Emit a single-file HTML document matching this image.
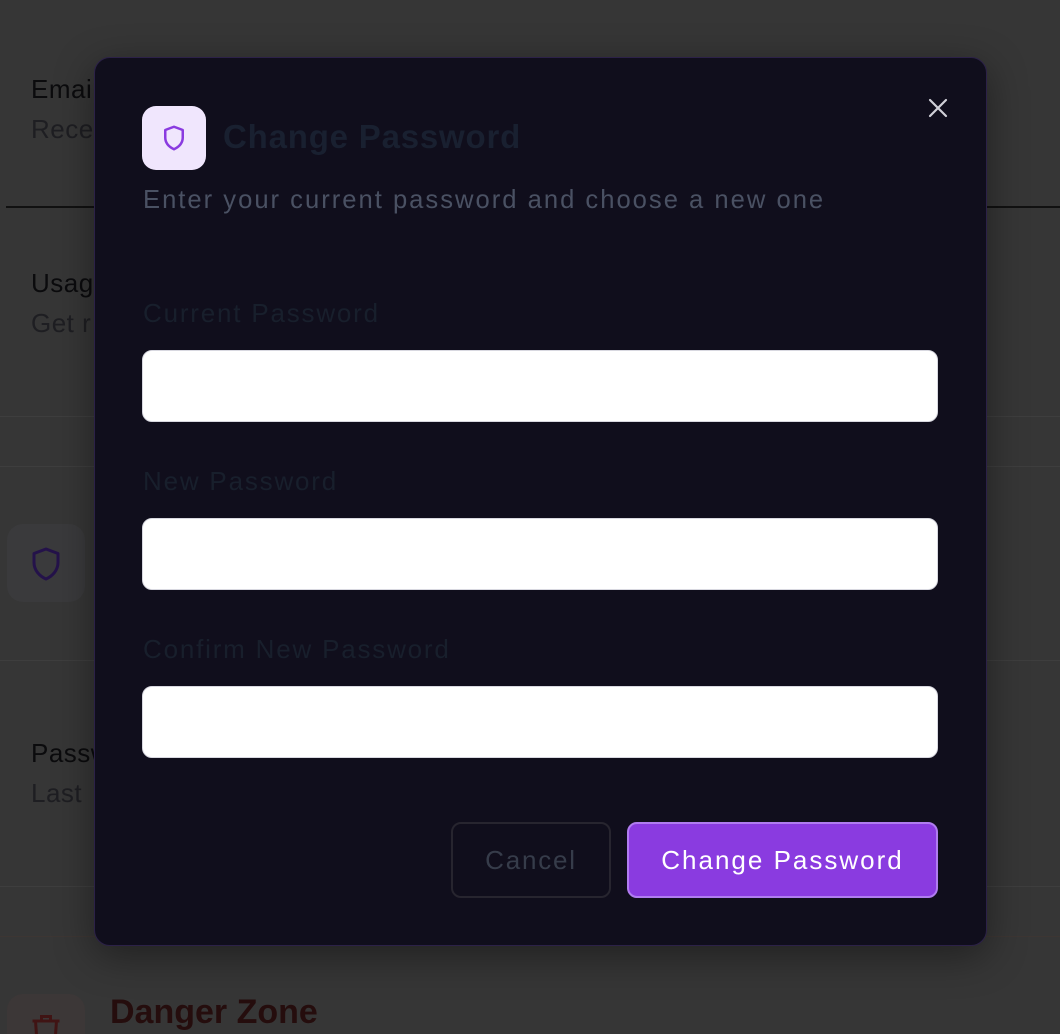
<!DOCTYPE html>
<html><head><style>
html,body{margin:0;width:1060px;height:1034px;overflow:hidden}
body{background:#363636;font-family:"Liberation Sans",sans-serif;position:relative}
.a{position:absolute}
.t{font-size:26px;color:#0b0b0d;letter-spacing:0.5px}
.s{font-size:26px;color:#1e1e22;letter-spacing:0.5px}
.ln{position:absolute;left:0;right:0;height:1px;background:#3e3e3e}
.m{position:absolute;left:94px;top:57px;width:891px;height:887px;background:#100e1c;border:1px solid #2c2148;border-radius:16px;box-shadow:0 10px 40px rgba(0,0,0,.4)}
.lab{position:absolute;left:48px;font-size:26px;color:#181f2c;letter-spacing:1.8px}
.in{position:absolute;left:47px;width:794px;height:70px;background:#fff;border:1px solid #d8d8e0;border-radius:10px}
</style></head><body>
<div class="a t" style="left:31px;top:74px">Email</div>
<div class="a s" style="left:31px;top:114px">Receive</div>
<div class="a" style="left:6px;right:0;top:206px;height:2px;background:#111"></div>
<div class="a t" style="left:31px;top:268px">Usage</div>
<div class="a s" style="left:31px;top:308px">Get r</div>
<div class="ln" style="top:416px"></div>
<div class="ln" style="top:466px"></div>
<div class="a" style="left:7px;top:524px;width:78px;height:78px;border-radius:16px;background:#3a3a3c"></div>
<svg class="a" style="left:28px;top:544px" width="36" height="40" viewBox="0 0 24 24" fill="none" stroke="#24124a" stroke-width="2" stroke-linejoin="round"><path d="M12 2l8 3v6c0 5-3.5 9-8 11-4.5-2-8-6-8-11V5z"/></svg>
<div class="ln" style="top:660px"></div>
<div class="a t" style="left:31px;top:738px">Password</div>
<div class="a s" style="left:31px;top:778px">Last</div>
<div class="ln" style="top:886px"></div>
<div class="ln" style="top:936px;background:#3d3633"></div>
<div class="a" style="left:7px;top:994px;width:78px;height:78px;border-radius:16px;background:#3c3737"></div>
<div class="a" style="left:110px;top:993px;font-size:34px;font-weight:bold;color:#250d0d">Danger Zone</div>
<svg class="a" style="left:28px;top:1012px" width="36" height="30" viewBox="0 0 24 20" fill="none" stroke="#401414" stroke-width="2"><path d="M3 6h18M9 6V3h6v3M5 6l1 14h12l1-14"/></svg>
<div class="m">
<div class="a" style="left:47px;top:48px;width:64px;height:64px;border-radius:14px;background:#f0e6fd"></div>
<svg class="a" style="left:64px;top:64px" width="30" height="32" viewBox="0 0 24 24" fill="none" stroke="#8a3be0" stroke-width="2" stroke-linejoin="round"><path d="M12 3l7 2.6v6c0 4.3-3 7.5-7 9.4-4-1.9-7-5.1-7-9.4v-6z"/></svg>
<div class="a" style="left:128px;top:60px;font-size:33px;font-weight:bold;color:#192030;letter-spacing:0.8px">Change Password</div>
<div class="a" style="left:48px;top:128px;font-size:25.6px;color:#4a5163;letter-spacing:2px">Enter your current password and choose a new one</div>
<svg class="a" style="left:831px;top:38px" width="24" height="24" viewBox="0 0 24 24" stroke="#d0d0d8" stroke-width="2.2" stroke-linecap="round"><path d="M4 4l16 16M20 4L4 20"/></svg>
<div class="lab" style="top:240px">Current Password</div>
<div class="in" style="top:292px"></div>
<div class="lab" style="top:408px">New Password</div>
<div class="in" style="top:460px"></div>
<div class="lab" style="top:576px">Confirm New Password</div>
<div class="in" style="top:628px"></div>
<div class="a" style="left:356px;top:764px;width:156px;height:72px;border:2px solid #27252f;border-radius:10px;font-size:26px;color:#363c4a;text-align:center;line-height:72px;letter-spacing:1.8px">Cancel</div>
<div class="a" style="left:532px;top:764px;width:307px;height:72px;border:2px solid #b07cf0;background:#8a3be0;border-radius:10px;font-size:26px;color:#fff;text-align:center;line-height:72px;letter-spacing:2px">Change Password</div>
</div>
</body></html>
